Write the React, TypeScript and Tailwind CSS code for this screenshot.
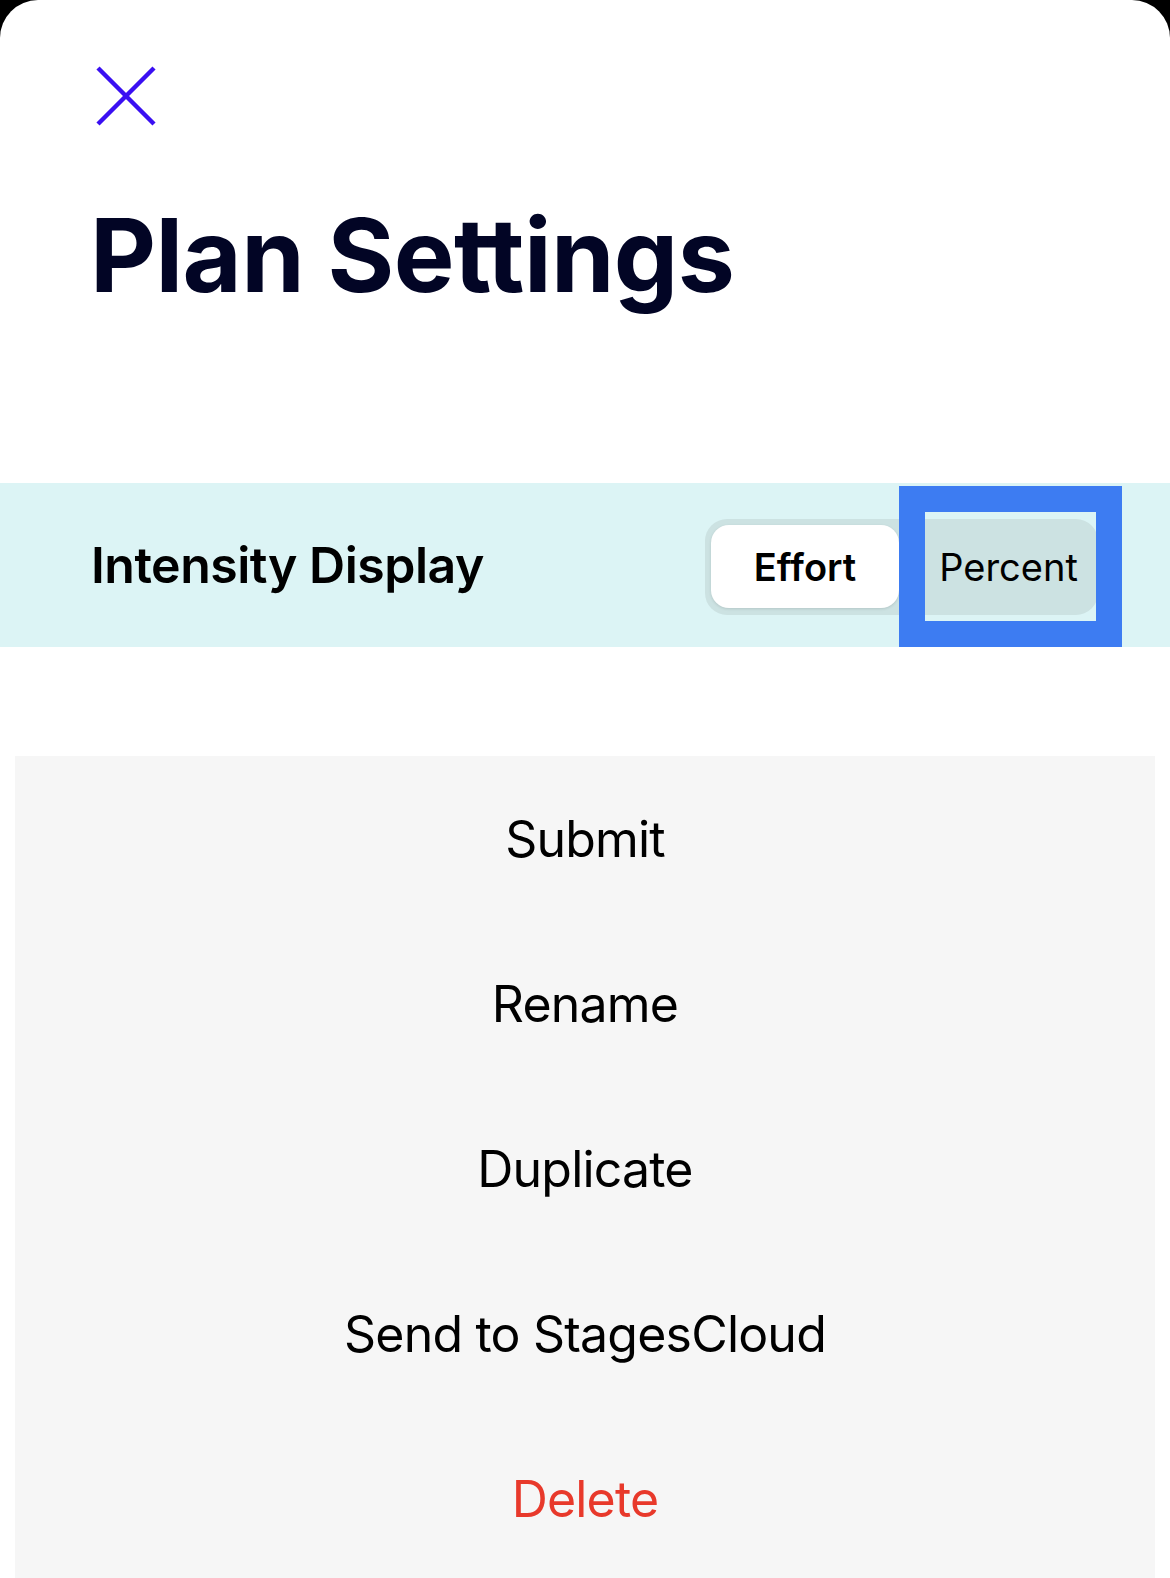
import React from "react";

const items = [
  { label: "Submit", danger: false },
  { label: "Rename", danger: false },
  { label: "Duplicate", danger: false },
  { label: "Send to StagesCloud", danger: false },
  { label: "Delete", danger: true },
];

export default function App() {
  return (
    <div className="min-h-[1578px] bg-black font-['Inter','Noto_Sans',sans-serif]">
      <div className="flex h-[1578px] flex-col overflow-hidden rounded-t-[38px] bg-white">
        <div className="shrink-0 pl-[94px] pt-[64px]">
          <button className="block h-[64px] w-[64px]" aria-label="Close">
            <svg width="64" height="64" viewBox="0 0 64 64" fill="none">
              <line x1="4" y1="4" x2="60" y2="60" stroke="#3a0ff2" strokeWidth="4.5" />
              <line x1="60" y1="4" x2="4" y2="60" stroke="#3a0ff2" strokeWidth="4.5" />
            </svg>
          </button>
        </div>
        <h1 className="mt-[76px] shrink-0 pl-[90px] text-[102px] font-bold leading-none tracking-[-0.6px] text-[#020525]">
          Plan Settings
        </h1>
        <div className="relative mt-[177px] flex h-[164px] shrink-0 items-center justify-between bg-[#dcf4f5] pl-[91px] pr-[72px]">
          <span className="text-[50px] font-semibold leading-none tracking-[-0.5px] text-black">
            Intensity Display
          </span>
          <div className="mt-[3px] flex h-[96px] w-[393px] items-center rounded-[22px] bg-[#cce2e2] p-[6px]">
            <div className="flex h-[83px] w-[188px] items-center justify-center rounded-[18px] bg-white shadow-[0_1px_3px_rgba(0,0,0,0.12)]">
              <span className="text-[38px] font-semibold leading-none text-black">Effort</span>
            </div>
            <div className="flex h-[83px] flex-1 items-center justify-center pl-[26px]">
              <span className="text-[38px] font-normal leading-none text-black">Percent</span>
            </div>
          </div>
          <div className="absolute right-[48px] top-[3px] h-[161px] w-[223px] border-[26px] border-[#3d7cf2]" />
        </div>
        <div className="mx-[15px] mt-[109px] flex-1 shrink-0 bg-[#f6f6f6]">
          {items.map((it) => (
            <div
              key={it.label}
              className={`flex h-[165px] items-center justify-center text-[50px] leading-none tracking-[-0.8px] ${
                it.danger ? "text-[#e8392b]" : "text-black"
              }`}
            >
              {it.label}
            </div>
          ))}
        </div>
      </div>
    </div>
  );
}
